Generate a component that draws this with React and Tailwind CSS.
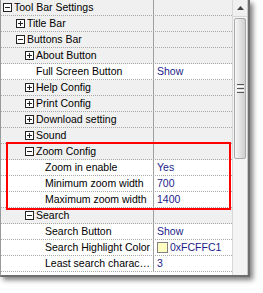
const rows = [
  { label: "Tool Bar Settings", pl: "pl-[2px]", box: "minus", group: true },
  { label: "Title Bar", pl: "pl-[15px]", box: "plus", group: true },
  { label: "Buttons Bar", pl: "pl-[15px]", box: "minus", group: true },
  { label: "About Button", pl: "pl-[24px]", box: "plus", group: true },
  { label: "Full Screen Button", pl: "pl-[35px]", value: "Show" },
  { label: "Help Config", pl: "pl-[24px]", box: "plus", group: true },
  { label: "Print Config", pl: "pl-[24px]", box: "plus", group: true },
  { label: "Download setting", pl: "pl-[24px]", box: "plus", group: true },
  { label: "Sound", pl: "pl-[24px]", box: "plus", group: true },
  { label: "Zoom Config", pl: "pl-[24px]", box: "minus", group: true },
  { label: "Zoom in enable", pl: "pl-[44px]", value: "Yes" },
  { label: "Minimum zoom width", pl: "pl-[44px]", value: "700" },
  { label: "Maximum zoom width", pl: "pl-[44px]", value: "1400" },
  { label: "Search", pl: "pl-[24px]", box: "minus", group: true },
  { label: "Search Button", pl: "pl-[44px]", value: "Show" },
  { label: "Search Highlight Color", pl: "pl-[44px]", value: "0xFCFFC1", swatch: true },
  { label: "Least search characters", pl: "pl-[44px]", value: "3" },
];

// Caja +/- del árbol
const ExpandBox = ({ type }) => (
  <span className="relative block w-[9px] h-[9px] border border-[#222] bg-white mr-[2px] shrink-0">
    <span className="absolute left-[1px] top-[3px] w-[5px] h-px bg-[#222]" />
    {type === "plus" && (
      <span className="absolute left-[3px] top-[1px] w-px h-[5px] bg-[#222]" />
    )}
  </span>
);

const Row = ({ row }) => (
  <div
    className={`grid grid-cols-[153px_1fr] h-[16px] border-b border-dotted border-[#a8a8a8] ${
      row.group ? "bg-[#f0f0f0]" : "bg-white"
    }`}
  >
    <div
      className={`flex items-center ${row.pl} border-r border-[#a0a0a0] overflow-hidden whitespace-nowrap text-black`}
    >
      {row.box && <ExpandBox type={row.box} />}
      <span className="truncate pr-[1px]">{row.label}</span>
    </div>
    <div className="flex items-center pl-[3px] text-[#1c1c8a] whitespace-nowrap">
      {row.swatch && (
        <span className="w-[11px] h-[11px] border border-[#808080] bg-[#FCFFC1] mr-[2px] shrink-0" />
      )}
      {row.value}
    </div>
  </div>
);

export default function App() {
  return (
    <div className="w-[263px] h-[293px] bg-white font-['Liberation_Sans',Arial,sans-serif] text-[10.5px] leading-none">
      <div className="relative w-[250px] h-[277px] flex border-l border-[#9a9a9a] border-b-2 border-r-2 border-b-[#6e6e6e] border-r-[#6e6e6e] shadow-[3px_3px_5px_rgba(0,0,0,0.5)]">
        {/* Lista de propiedades */}
        <div className="flex-1 flex flex-col overflow-hidden">
          {rows.map((row) => (
            <Row key={row.label} row={row} />
          ))}
          <div className="flex-1 bg-white" />
        </div>

        {/* Barra de desplazamiento */}
        <div className="w-[16px] flex flex-col bg-[#f4f4f4] border-l border-[#d8d8d8] border-r border-r-[#c8c8c8]">
          <div className="h-[17px] flex items-center justify-center bg-[#f0f0f0] border-b border-[#d8d8d8]">
            <svg width="7" height="4" viewBox="0 0 7 4">
              <path d="M3.5 0 L7 4 L0 4 Z" fill="#444" />
            </svg>
          </div>
          <div className="mt-[1px] mx-[1px] h-[141px] rounded-[2px] border border-[#a9a9a9] bg-gradient-to-r from-[#f6f6f6] via-[#e2e2e2] to-[#cfcfcf] flex items-center justify-center">
            <div className="flex flex-col gap-[1px]">
              <span className="w-[7px] h-px bg-[#555]" />
              <span className="w-[7px] h-px bg-[#fff]" />
              <span className="w-[7px] h-px bg-[#555]" />
              <span className="w-[7px] h-px bg-[#fff]" />
              <span className="w-[7px] h-px bg-[#555]" />
            </div>
          </div>
          <div className="flex-1" />
        </div>

        {/* Marco rojo sobre Zoom Config */}
        <div className="absolute left-[5px] top-[142px] w-[225px] h-[68px] border-2 border-[#ff0000] pointer-events-none" />
      </div>
    </div>
  );
}
